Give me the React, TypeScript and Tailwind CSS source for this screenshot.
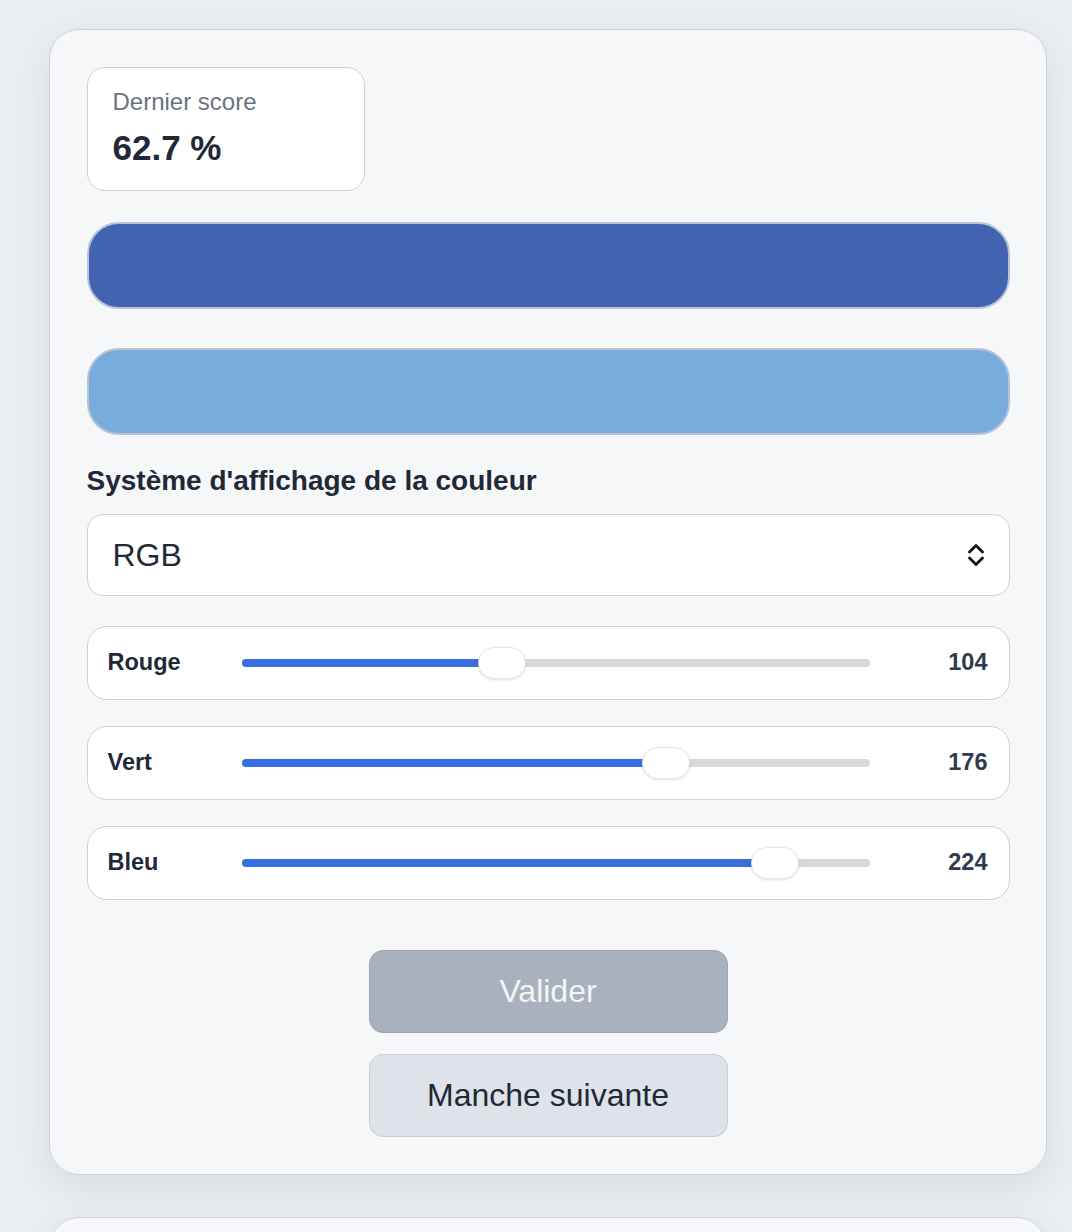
import React from 'react'

const font = { fontFamily: '"Liberation Sans", Arial, sans-serif' }

type Channel = { label: string; value: number }

const channels: Channel[] = [
	{ label: 'Rouge', value: 104 },
	{ label: 'Vert', value: 176 },
	{ label: 'Bleu', value: 224 },
]

function SliderRow({ label, value }: Channel) {
	const frac = value / 255
	return (
		<div className="flex h-[74px] items-center rounded-[20px] border border-[#cdd1d9] bg-white pl-[20px] pr-[21px]">
			<span className="w-[134px] text-[23.5px] font-bold text-[#1f2937]">{label}</span>
			<div className="relative h-[32px] flex-1">
				<div className="absolute left-0 right-0 top-[12px] h-[8px] rounded-full bg-[#d9d9d9]" />
				<div
					className="absolute left-0 top-[12px] h-[8px] rounded-full bg-[#396ee1]"
					style={{ width: `calc(24px + ${frac} * (100% - 48px))` }}
				/>
				<div
					className="absolute top-0 h-[32px] w-[48px] rounded-full border border-[#e6e7ea] bg-white shadow-[0_1px_3px_rgba(0,0,0,0.12)]"
					style={{ left: `calc(${frac} * (100% - 48px))` }}
				/>
			</div>
			<span className="w-[118px] text-right text-[23.5px] font-bold text-[#2f3a4c]">{value}</span>
		</div>
	)
}

export default function App() {
	return (
		<div className="min-h-screen bg-[#eaedf1] pt-[29px]" style={font}>
			<div className="ml-[49px] w-[998px] rounded-[30px] border-[1.5px] border-[#cdd1d9] bg-[#f6f7f9] px-[36.5px] pb-[37px] pt-[36.5px] shadow-[0_12px_36px_rgba(30,41,59,0.08)]">
				<div className="flex w-[278px] flex-col rounded-[18px] border-[1.5px] border-[#cdd1d9] bg-white px-[25px] pb-[21px] pt-[20px]">
					<span className="text-[24px] leading-[28px] text-[#6b7280]">Dernier score</span>
					<span className="mt-[11px] text-[35px] font-bold leading-[42px] text-[#1f2937]">62.7 %</span>
				</div>

				<div className="mt-[31px] h-[87px] rounded-[32px] border-2 border-[#b9c3d8] bg-[#4163b0]" />
				<div className="mt-[39px] h-[87px] rounded-[32px] border-2 border-[#b9c3d8] bg-[#78acdb]" />

				<div className="mt-[28px] text-[28px] font-bold leading-[35px] text-[#1f2937]">
					Système d'affichage de la couleur
				</div>

				<div className="mt-[16px] flex h-[82px] items-center justify-between rounded-[16px] border-[1.5px] border-[#cdd1d9] bg-white pl-[25px] pr-[23px]">
					<span className="text-[32px] text-[#1f2937]">RGB</span>
					<svg width="20" height="26" viewBox="0 0 20 26" fill="none" stroke="#111" strokeWidth="2.8" strokeLinecap="round" strokeLinejoin="round">
						<path d="M3.5 10 10 3.5 16.5 10" />
						<path d="M3.5 16 10 22.5 16.5 16" />
					</svg>
				</div>

				<div className="mt-[30px] flex flex-col gap-[26px]">
					{channels.map((c) => (
						<SliderRow key={c.label} {...c} />
					))}
				</div>

				<div className="mt-[50px] flex flex-col items-center gap-[21px]">
					<button className="h-[83px] w-[359px] rounded-[14px] border-[1.5px] border-[#9ca5b1] bg-[#a8b1bd] text-[32px] text-[#f4f5f7]">
						Valider
					</button>
					<button className="h-[83px] w-[359px] rounded-[14px] border-[1.5px] border-[#c9ced7] bg-[#dee2e9] text-[32px] text-[#1f2937]">
						Manche suivante
					</button>
				</div>
			</div>

			<div className="ml-[49px] mt-[42px] h-[200px] w-[998px] rounded-[30px] border-[1.5px] border-[#cdd1d9] bg-[#f6f7f9] shadow-[0_12px_36px_rgba(30,41,59,0.08)]" />
		</div>
	)
}
